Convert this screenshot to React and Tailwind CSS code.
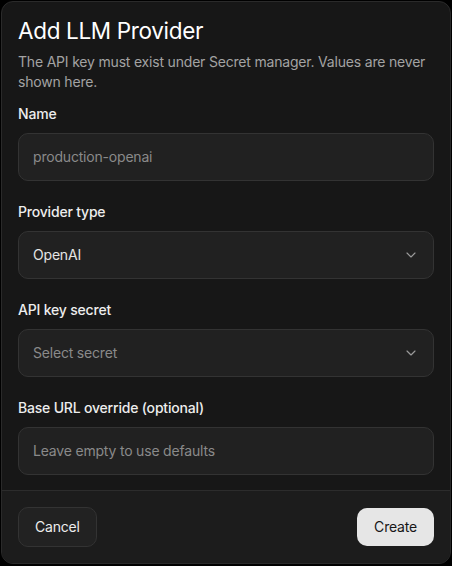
import { ChevronDown } from "lucide-react";

function Field({ label, children, first }) {
  return (
    <div className={first ? "" : "mt-[21px]"}>
      <div className="text-sm leading-5 font-medium text-[#ededed] mb-[9px]">{label}</div>
      {children}
    </div>
  );
}

function TextBox({ placeholder }) {
  return (
    <div className="h-12 rounded-[10px] border border-[#333333] bg-[#212121] px-3.5 flex items-center text-sm text-[#8a8a8a]">
      {placeholder}
    </div>
  );
}

function SelectBox({ value, placeholder }) {
  return (
    <div className="h-12 rounded-[10px] border border-[#333333] bg-[#212121] pl-3.5 pr-3.5 flex items-center justify-between text-sm">
      <span className={value ? "text-[#e5e5e5]" : "text-[#8a8a8a]"}>{value || placeholder}</span>
      <ChevronDown size={16} strokeWidth={1.75} className="text-[#9a9a9a]" />
    </div>
  );
}

export default function App() {
  return (
    <div
      className="w-[452px] h-[566px] bg-black p-px tracking-[-0.012em]"
      style={{ fontFamily: "Inter, 'Noto Sans', sans-serif" }}
    >
      <div className="w-[450px] h-[563px] rounded-xl border border-[#2a2a2a] bg-[#171717] flex flex-col overflow-hidden">
        <div className="flex-1 px-4 pt-[13px] pb-[15px]">
          <h1 className="text-[22.5px] leading-8 font-normal text-white tracking-[-0.015em]">Add LLM Provider</h1>
          <p className="text-sm leading-5 text-[#a3a3a3] mt-[5px]">
            The API key must exist under Secret manager. Values are never shown here.
          </p>
          <div className="mt-3">
            <Field label="Name" first>
              <TextBox placeholder="production-openai" />
            </Field>
            <Field label="Provider type">
              <SelectBox value="OpenAI" />
            </Field>
            <Field label="API key secret">
              <SelectBox placeholder="Select secret" />
            </Field>
            <Field label="Base URL override (optional)">
              <TextBox placeholder="Leave empty to use defaults" />
            </Field>
          </div>
        </div>
        <div className="border-t border-[#2c2c2c] bg-[#1c1c1c] px-4 py-4 flex items-center justify-between">
          <button className="h-10 px-4 rounded-[10px] border border-[#333333] bg-[#222222] text-sm text-[#ededed]">
            Cancel
          </button>
          <button className="h-[38px] px-[17px] rounded-[10px] bg-[#e6e6e6] text-sm text-[#171717]">
            Create
          </button>
        </div>
      </div>
    </div>
  );
}
